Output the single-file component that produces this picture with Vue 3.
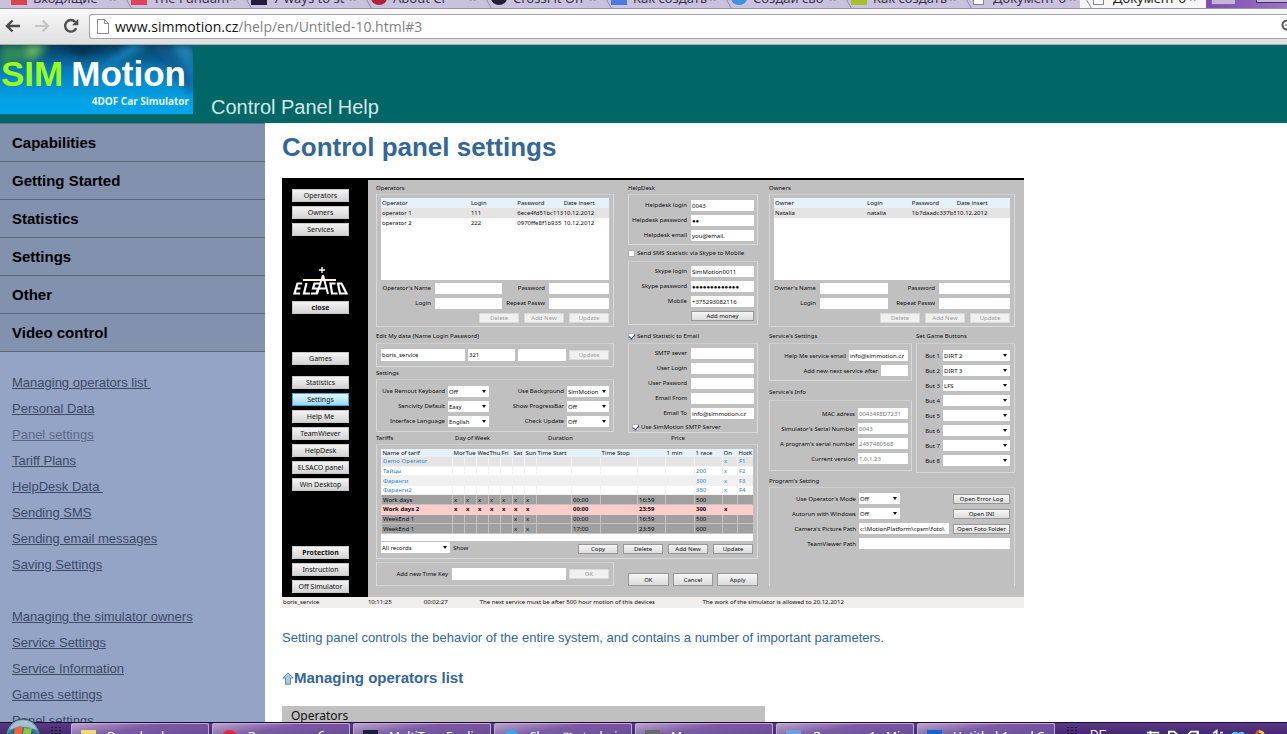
<script setup>
const tabs = [
  { t: 'Входящие', c: '#d9444f' },
  { t: 'The Fundam', c: '#e0405a' },
  { t: '7 ways to st', c: '#241c3a' },
  { t: 'About Cr', c: '#b3203a', r: 1 },
  { t: 'CrossFit On', c: '#241f38', r: 1 },
  { t: 'Как создать', c: '#4a7be0' },
  { t: 'Создай сво', c: '#3a94dc', r: 1 },
  { t: 'Как создать', c: '#a6bf2a' },
  { t: 'Документ б', doc: 1 },
  { t: 'Документ б', doc: 1, on: 1 }
]
const menu = ['Capabilities', 'Getting Started', 'Statistics', 'Settings', 'Other', 'Video control']
const links1 = ['Managing operators list\u00a0', 'Personal Data', 'Panel settings', 'Tariff Plans', 'HelpDesk Data\u00a0', 'Sending SMS', 'Sending email messages', 'Saving Settings']
const links2 = ['Managing the simulator owners', 'Service Settings', 'Service Information', 'Games settings', 'Panel settings']

const navTop = ['Operators', 'Owners', 'Services']
const navMid = ['Statistics', 'Settings', 'Help Me', 'TeamWiever', 'HelpDesk', 'ELSACO panel', 'Win Desktop']
const navEnd = ['Protection', 'Instruction', 'Off Simulator']

const people = [
  {
    title: 'Operators', cls: 'ops', head: 'Operator', name: "Operator's Name",
    rows: [['operator 1', '111', '6ece4fd51bc113', '10.12.2012'], ['operator 2', '222', '0970ffe8f1b935', '10.12.2012']]
  },
  {
    title: 'Owners', cls: 'own', head: 'Owner', name: "Owner's Name",
    rows: [['Natalia', 'natalia', '1b7daadc337b5', '10.12.2012']]
  }
]
const opts = [
  ['Use Remout Keyboard', 'Off', 'Use Background', 'SimMotion'],
  ['Sencivity Default', 'Easy', 'Show ProgressBar', 'Off'],
  ['Interface Language', 'English', 'Check Update', 'Off']
]
const help = [['Helpdesk login', '0043'], ['Helpdesk password', '●●'], ['Helpdesk email', 'you@email.']]
const skype = [['Skype login', 'SimMotion0011'], ['Skype password', '●●●●●●●●●●●●●'], ['Mobile', '+375293082116']]
const smtp = [['SMTP sever', ''], ['User Login', ''], ['User Pasword', ''], ['Email From', ''], ['Email To', 'info@simmotion.cz']]
const info = [['MAC adress', '00434F8D7231'], ["Simulator's Serial Number", '0043'], ["A program's serial number", '2457480568'], ['Current version', '1.0.1.23']]
const games = ['DIRT 2', 'DIRT 3', 'LFS', '', '', '', '', '']

const cols = ['Name of tarif', 'Mon', 'Tue', 'Wed', 'Thu', 'Fri', 'Sat', 'Sun', 'Time Start', '', 'Time Stop', '', '1 min', '1 race', 'On', 'HotK']
const x7 = ['x', 'x', 'x', 'x', 'x', 'x', 'x']
const we = ['', '', '', '', '', 'x', 'x']
const no = ['', '', '', '', '', '', '']
const tariffs = [
  { k: 'blue odd', c: ['Demo Operator', ...no, '', '', '', '', '', '', 'x', 'F1'] },
  { k: 'blue', c: ['Тайцы', ...no, '', '', '', '', '', '200', 'x', 'F2'] },
  { k: 'blue pale', c: ['Фаранги', ...no, '', '', '', '', '', '300', 'x', 'F3'] },
  { k: 'blue', c: ['Фаранги2', ...no, '', '', '', '', '', '350', 'x', 'F4'] },
  { k: 'dark', c: ['Work days', ...x7, '', '00:00', '', '16:59', '', '500', '', ''] },
  { k: 'pink', c: ['Work days 2', ...x7, '', '00:00', '', '23:59', '', '300', 'x', ''] },
  { k: 'dark', c: ['WeekEnd 1', ...we, '', '00:00', '', '16:59', '', '500', '', ''] },
  { k: 'dark', c: ['WeekEnd 1', ...we, '', '17:00', '', '23:59', '', '600', '', ''] }
]
const tasks = [
  { t: 'Downloads', c: '#f0d878' },
  { t: 'Входящие - б', c: '#e02a3a', r: 1 },
  { t: 'MultiTran Englis', c: '#1a2040' },
  { t: 'Skype™ - technic', c: '#1fb0ee', r: 1 },
  { t: 'Мануал', c: '#6a6a6a' },
  { t: 'Документ1 - Mi', c: '#6f9fe0' },
  { t: 'Untitled-1 and C', c: '#1668c8' }
]
</script>

<template>
  <div class="screen">
    <div class="tabs">
      <button v-for="(t, i) in tabs" :key="i" class="tab" :class="{ on: t.on }">
        <i class="fav" :class="{ doc: t.doc, round: t.r }" :style="t.c ? { background: t.c } : null"></i>
        <span>{{ t.t }}</span><em>×</em>
      </button>
      <button class="newtab" aria-label="New tab"></button>
      <i class="winctl"></i>
    </div>

    <div class="toolbar">
      <button class="tb" aria-label="Back">
        <svg width="16" height="14" viewBox="0 0 16 14"><path d="M15 7H2.500M7.500 1.500L2 7l5.500 5.500" fill="none" stroke="#4a4a4a" stroke-width="2.400" /></svg>
      </button>
      <button class="tb" aria-label="Forward">
        <svg width="16" height="14" viewBox="0 0 16 14"><path d="M1 7h12.500M8.500 1.500L14 7l-5.500 5.500" fill="none" stroke="#c4c4c4" stroke-width="2.200" /></svg>
      </button>
      <button class="tb" aria-label="Reload">
        <svg width="16" height="16" viewBox="0 0 16 16"><path d="M13.200 10.200A5.800 5.800 0 1 1 12.300 4" fill="none" stroke="#505050" stroke-width="2.400" /><path d="M15.300 .8v6.400H9z" fill="#505050" /></svg>
      </button>
      <div class="omni">
        <svg width="12" height="15" viewBox="0 0 12 15"><path d="M.5.5h7l4 4v10H.5zM7.500.5v4h4" fill="#fff" stroke="#8a8a8a" /></svg>
        <span class="url"><b>www.simmotion.cz</b>/help/en/Untitled-10.html#3</span>
        <svg class="mag" width="14" height="14" viewBox="0 0 14 14"><circle cx="6" cy="6" r="4.500" fill="none" stroke="#555" stroke-width="2" /><path d="M4 6h4" stroke="#555" /></svg>
      </div>
    </div>

    <div class="page">
      <header class="head">
        <div class="logo">
          <svg class="logobg" viewBox="0 0 192 69" preserveAspectRatio="none">
            <defs>
              <linearGradient id="lg" x1="0" y1="0" x2="0" y2="1"><stop offset="0" stop-color="#063a58" /><stop offset=".35" stop-color="#0878b8" /><stop offset=".75" stop-color="#04a0e4" /><stop offset="1" stop-color="#00a4ec" /></linearGradient>
              <filter id="bl"><feGaussianBlur stdDeviation="4" /></filter>
            </defs>
            <rect width="192" height="69" fill="url(#lg)" />
            <g filter="url(#bl)">
              <path d="M0 0h50L38 14 0 22z" fill="#2f8a5c" /><path d="M28 0h14L30 16z" fill="#7cc860" />
              <path d="M150 0h12l30 34v18z" fill="#0a5a90" /><path d="M130 0h20l-60 30z" fill="#1a8cc8" />
              <path d="M168 0h24v26z" fill="#2486b8" /><path d="M60 0h50L80 10z" fill="#052c48" />
            </g>
          </svg>
          <div class="brand"><span class="sim">SIM</span><span>Motion</span></div>
          <div class="tag">4DOF Car Simulator</div>
        </div>
        <div class="sub">Control Panel Help</div>
      </header>

      <div class="body">
        <aside class="side">
          <nav class="menu"><a v-for="m in menu" :key="m" href="#">{{ m }}</a></nav>
          <nav class="links">
            <a v-for="(l, i) in links1" :key="l" href="#" :class="{ seen: i === 2 }">{{ l }}</a>
            <a v-for="(l, i) in links2" :key="l" href="#" :class="{ first: i === 0 }">{{ l }}</a>
          </nav>
        </aside>

        <main class="content">
          <h1>Control panel settings</h1>

          <section class="shot">
            <div class="frame">
              <div class="nav">
                <div class="ng"><button v-for="n in navTop" :key="n">{{ n }}</button></div>
                <svg class="elsaco" width="57" height="31" viewBox="0 0 57 31" fill="none" stroke="#fff">
                  <path d="M30 1v6M27 4h6" stroke-width="1.300" />
                  <path d="M11 14H44" stroke="#fff8d8" stroke-width="1.800" />
                  <path d="M10 17.500H5.500L2.500 27.500H8M4 22.500h4.500M14.500 17L12 27.500h6M28 17.500h-5.500l-1.500 5h5l-1.500 5h-5.500" stroke-width="2.200" />
                  <path d="M31 9L25 28M31 9L36 28M27.500 22.500h6" stroke-width="2" />
                  <path d="M43.500 17.500h-5l1.500 10h5.500M46 17.500l2 10h6.500L49.500 17.500z" stroke-width="2.200" />
                </svg>
                <button class="bold close">close</button>
                <button class="games">Games</button>
                <div class="ng mid"><button v-for="(n, i) in navMid" :key="n" :class="{ act: i === 1 }">{{ n }}</button></div>
                <div class="ng end"><button v-for="(n, i) in navEnd" :key="n" :class="{ bold: i === 0 }">{{ n }}</button></div>
              </div>

              <div class="work">
                <div class="left">
                  <div class="pair">
                    <div class="colA">
                      <template v-for="p in people.slice(0, 1)" :key="p.title">
                        <div class="cap">{{ p.title }}</div>
                        <div class="box people">
                          <div class="list">
                            <table>
                              <thead><tr><th>{{ p.head }}</th><th>Login</th><th>Password</th><th>Date insert</th></tr></thead>
                              <tbody><tr v-for="r in p.rows" :key="r[0]"><td v-for="c in r" :key="c">{{ c }}</td></tr></tbody>
                            </table>
                          </div>
                          <div class="fields" :class="p.cls">
                            <label><span>{{ p.name }}</span><input /></label>
                            <label><span>Password</span><input /></label>
                            <label><span>Login</span><input /></label>
                            <label><span>Repeat Passw</span><input /></label>
                          </div>
                          <div class="acts"><button disabled>Delete</button><button disabled>Add New</button><button disabled>Update</button></div>
                        </div>
                      </template>
                      <div class="cap tall">Edit My data (Name Login Password)</div>
                      <div class="box line edit">
                        <input value="boris_service" aria-label="Name" class="w2" />
                        <input value="321" aria-label="Login" />
                        <input aria-label="Password" />
                        <button disabled>Update</button>
                      </div>
                      <div class="cap short">Settings</div>
                      <div class="box opts">
                        <template v-for="o in opts" :key="o[0]">
                          <label><span>{{ o[0] }}</span><span class="sel"><select><option>{{ o[1] }}</option></select></span></label>
                          <label><span>{{ o[2] }}</span><span class="sel"><select><option>{{ o[3] }}</option></select></span></label>
                        </template>
                      </div>
                    </div>

                    <div class="colB">
                      <div class="cap">HelpDesk</div>
                      <div class="box form b1"><label v-for="f in help" :key="f[0]"><span>{{ f[0] }}</span><input :value="f[1]" /></label></div>
                      <label class="check"><input type="checkbox" />Send SMS Statistic via Skype to Mobile</label>
                      <div class="box form b2">
                        <label v-for="f in skype" :key="f[0]"><span>{{ f[0] }}</span><input :value="f[1]" /></label>
                        <button class="money">Add money</button>
                      </div>
                      <label class="check more"><input type="checkbox" checked />Send Statistic to Email</label>
                      <div class="box form b3">
                        <label v-for="f in smtp" :key="f[0]"><span>{{ f[0] }}</span><input :value="f[1]" /></label>
                        <label class="check in"><input type="checkbox" checked />Use SimMotion SMTP Server</label>
                      </div>
                    </div>
                  </div>

                  <div class="heads"><span>Tariffs</span><span>Day of Week</span><span>Duration</span><span>Price</span></div>
                  <div class="box tar">
                    <div class="list">
                      <table>
                        <colgroup><col class="c1" /><col v-for="n in 7" :key="n" class="cd" /><col class="c2" /><col class="c3" /><col class="c4" /><col class="c5" /><col class="c3" /><col class="c5" /><col class="c6" /><col class="c7" /></colgroup>
                        <thead><tr><th v-for="(c, i) in cols" :key="i">{{ c }}</th></tr></thead>
                        <tbody><tr v-for="(r, j) in tariffs" :key="j" :class="r.k"><td v-for="(c, i) in r.c" :key="i">{{ c }}</td></tr></tbody>
                      </table>
                    </div>
                    <div class="tfoot">
                      <label class="rec"><span class="sel"><select><option>All records</option></select></span>Show</label>
                      <div class="acts"><button>Copy</button><button>Delete</button><button>Add New</button><button>Update</button></div>
                    </div>
                  </div>

                  <div class="pair last">
                    <div class="box line key">
                      <label><span>Add new Time Key</span><input /></label>
                      <button disabled>OK</button>
                    </div>
                    <div class="big"><button>OK</button><button>Cancel</button><button>Apply</button></div>
                  </div>
                </div>

                <div class="right">
                  <template v-for="p in people.slice(1)" :key="p.title">
                    <div class="cap">{{ p.title }}</div>
                    <div class="box people owners">
                      <div class="list">
                        <table>
                          <thead><tr><th>{{ p.head }}</th><th>Login</th><th>Password</th><th>Date insert</th></tr></thead>
                          <tbody><tr v-for="r in p.rows" :key="r[0]"><td v-for="c in r" :key="c">{{ c }}</td></tr></tbody>
                        </table>
                      </div>
                      <div class="fields" :class="p.cls">
                        <label><span>{{ p.name }}</span><input /></label>
                        <label><span>Password</span><input /></label>
                        <label><span>Login</span><input /></label>
                        <label><span>Repeat Passw</span><input /></label>
                      </div>
                      <div class="acts"><button disabled>Delete</button><button disabled>Add New</button><button disabled>Update</button></div>
                    </div>
                  </template>

                  <div class="svc">
                    <div class="svcL">
                      <div class="cap tall">Service's Settings</div>
                      <div class="box rows s1">
                        <label><span>Help Me service email</span><input value="info@simmotion.cz" class="m" /></label>
                        <label><span>Add new next service after</span><input class="s" /></label>
                      </div>
                      <div class="cap taller">Service's Info</div>
                      <div class="box rows s2">
                        <label v-for="f in info" :key="f[0]"><span>{{ f[0] }}</span><input :value="f[1]" disabled /></label>
                      </div>
                    </div>
                    <div class="svcR">
                      <div class="cap tall">Set Game Buttons</div>
                      <div class="box rows gm">
                        <label v-for="(g, i) in games" :key="i"><span>But {{ i + 1 }}</span><span class="sel"><select><option>{{ g }}</option></select></span></label>
                      </div>
                    </div>
                  </div>

                  <div class="cap">Program's Setting</div>
                  <div class="box prog">
                    <div><label><span>Use Operator's Mode</span><span class="sel"><select><option>Off</option></select></span></label><button>Open Error Log</button></div>
                    <div><label><span>Autorun with Windows</span><span class="sel"><select><option>Off</option></select></span></label><button>Open INI</button></div>
                    <div><label class="grow"><span>Camera's Picture Path</span><input value="c:\MotionPlatform\cpsm\foto\" /></label><button>Open Foto Folder</button></div>
                    <div><label class="grow"><span>TeamViewer Path</span><input /></label></div>
                  </div>
                </div>
              </div>
            </div>
            <div class="status"><span>boris_service</span><span>10:11:25</span><span>00:02:27</span><span>The next service must be after 500 hour motion of this devices</span><span>The work of the simulator is allowed to 20.12.2012</span></div>
          </section>

          <p>Setting panel controls the behavior of the entire system, and contains a number of important parameters.</p>
          <h2>
            <svg width="12" height="13" viewBox="0 0 12 13"><path d="M6 .8L11.200 6H8.500v6.200h-5V6H.8z" fill="#a8c8dc" stroke="#5f8fa8" /></svg>Managing operators list
          </h2>
          <div class="next">Operators</div>
        </main>
      </div>
    </div>

    <footer class="taskbar">
      <button class="orb" aria-label="Start">
        <svg width="36" height="36" viewBox="0 0 36 36">
          <defs><radialGradient id="og" cx=".5" cy=".7" r=".7"><stop offset="0" stop-color="#3aa0d8" /><stop offset=".6" stop-color="#2a5f8c" /><stop offset="1" stop-color="#8fb0c4" /></radialGradient></defs>
          <circle cx="18" cy="18" r="17" fill="url(#og)" stroke="#28405c" />
          <path d="M4 12a15 15 0 0 1 28 0q-14-6-28 0z" fill="#c4d8e0" opacity=".7" />
          <path d="M10 10q4-3 8-1l-1.500 8q-4-2-8 1z" fill="#e8643c" /><path d="M19 9.500q4 2 8 0l-1.500 8q-4 2-8 0z" fill="#8cc63e" />
        </svg>
      </button>
      <i class="grip"></i>
      <button v-for="t in tasks" :key="t.t" class="task"><i :class="{ round: t.r }" :style="{ background: t.c }"></i><span>{{ t.t }}</span></button>
      <i class="grip g2"></i>
      <span class="lang">DE</span>
      <svg class="tray" width="160" height="12" viewBox="0 0 160 12" fill="none" stroke="#fff" stroke-width="2">
        <path d="M1 10h14M5 8v4M26 12V9h6l3 3M48 12l3-3h8v3M58 8v4M76 11l4-3v4M84 10h3" />
        <path d="M98 12a4 4 0 0 1 6 0M105 12a4 4 0 0 1 6 0" stroke="#5ac0f0" stroke-width="3" />
        <path d="M125 12a5 5 0 0 1 4-4" stroke="#e0503c" stroke-width="3" /><path d="M128 9q4 0 5 3" stroke="#f0d040" stroke-width="3" />
      </svg>
    </footer>
  </div>
</template>

<style>
html, body { margin: 0; overflow: hidden; }
</style>

<style scoped>
* { box-sizing: border-box; }
button, input, select { font: inherit; color: inherit; margin: 0; padding: 0; border: 0; border-radius: 0; min-width: 0; }
.screen { display: flex; flex-direction: column; height: 100vh; overflow: hidden; background: #fff; font-family: "Liberation Sans", Arial, sans-serif; }

.tabs { flex: none; display: flex; align-items: flex-end; height: 9px; overflow: hidden; background: linear-gradient(90deg, #c6bfdb 90%, #7a4fae 94%, #9a76c4); border-bottom: 1px solid #9890a4; }
.tab { flex: none; position: relative; display: flex; align-items: center; width: 120px; height: 20px; padding: 0 0 0 11px; background: #c9c2dd; font: 13px "Noto Sans", sans-serif; color: #37324a; text-align: left; }
.tab + .tab::before { content: ""; position: absolute; left: 5px; top: 0; width: 1px; height: 20px; background: #8f88a4; transform: skewX(30deg); }
.tab span { width: 76px; overflow: hidden; white-space: nowrap; margin-left: 6px; }
.tab em { font-style: normal; color: #857d98; }
.tab.on { background: #f7f7f7; color: #222; width: 126px; }
.fav { flex: none; width: 16px; height: 14px; }
.round { border-radius: 50%; }
.doc { width: 11px; height: 13px; margin: 0 3px 0 2px; background: #fff; border: 1px solid #888; }
.newtab { align-self: flex-start; width: 25px; height: 5px; margin-left: 5px; background: #c6b4dc; border: 1px solid #8560a8; border-top: 0; }
.winctl { align-self: flex-start; flex: 1; height: 3px; margin-left: 20px; background: #c9b4de; border: 1px solid #40305c; border-right: 0; border-top: 0; }

.toolbar { flex: none; display: flex; align-items: center; height: 36px; padding: 0 0 1px 4px; background: linear-gradient(#f8f8f8, #dfdfdf); border-bottom: 1px solid #a8b0b0; }
.tb { display: flex; align-items: center; justify-content: center; width: 29px; height: 24px; background: none; }
.tb:first-child { width: 17px; margin-right: 6px; }
.omni { flex: 1; display: flex; align-items: center; height: 25px; margin-left: 4px; padding: 0 0 0 7px; background: #fff; border: 1px solid #a4a4a4; border-right: 0; border-radius: 3px 0 0 3px; overflow: hidden; }
.url { flex: 1; margin-left: 6px; font: 14px "Open Sans", sans-serif; color: #808080; white-space: nowrap; }
.url b { font-weight: 400; color: #111; }
.mag { margin-right: -8px; }

.page { flex: 1; min-height: 0; overflow: hidden; }
.head { display: flex; align-items: flex-start; height: 78px; background: #006666; }
.logo { position: relative; width: 193px; height: 69px; overflow: hidden; }
.logobg { position: absolute; inset: 0; width: 100%; height: 100%; }
.brand { position: relative; display: flex; gap: 8px; padding: 9px 0 0 1px; font-size: 35px; line-height: 40px; font-weight: 700; color: #fff; }
.sim { color: #99ff1a; }
.tag { position: relative; padding-right: 4px; text-align: right; font: 700 10px/14px "Noto Sans", sans-serif; color: #e8f6ff; }
.sub { align-self: flex-end; margin: 0 0 4px 18px; font-size: 20px; line-height: 24px; color: #d4e6e6; }

.body { display: flex; height: 100%; }
.side { flex: none; width: 265px; background: #93a4c6; }
.menu { display: flex; flex-direction: column; border-top: 1px solid #5c7088; }
.menu a { padding: 0 12px; font-size: 15px; line-height: 37px; font-weight: 700; color: #000; text-decoration: none; background: #8191ae; border-bottom: 1px solid #5f6672; }
.links { display: flex; flex-direction: column; align-items: flex-start; padding: 18px 12px 0; }
.links a { font-size: 13px; line-height: 26px; color: #3c4a66; }
.links a.seen { color: #5c6788; }
.links a.first { margin-top: 26px; }

.content { flex: 1; min-width: 0; padding: 8px 17px 0; color: #336699; }
h1 { margin: 0 0 15px; font-size: 26px; line-height: 32px; }
p { margin: 20px 0 0; font-size: 13px; line-height: 20px; }
h2 { display: flex; align-items: center; margin: 20px 0 18px; font-size: 15px; line-height: 20px; }
.next { max-width: 483px; height: 60px; padding-left: 9px; font: 12px/20px "Noto Sans", sans-serif; color: #111; background: #c0c0c0; }

.shot { max-width: 742px; font: 6px/10px "Noto Sans", sans-serif; color: #0c0c0c; white-space: nowrap; }
.frame { display: flex; border-top: 2px solid #000; background: #c0c0c0; }
.nav { flex: none; display: flex; flex-direction: column; width: 86px; padding: 9px 19px 4px 10px; background: #000; }
.nav button { flex: none; height: 13px; font-size: 7px; line-height: 11px; color: #111; background: linear-gradient(#f4f4f4, #d4d4d4); border: 1px solid #c8c8c8; }
.nav .act { background: linear-gradient(#e4f8ff, #9ad8f2); border-color: #3aa8dc; }
.nav .bold { font-weight: 700; }
.ng { display: flex; flex-direction: column; gap: 4px; }
.elsaco { margin: 30px 0 4px; }
.games { margin-top: 38px; }
.mid { margin-top: 11px; }
.end { margin-top: auto; }

.work { flex: 1; min-width: 0; display: grid; grid-template-columns: 382fr 246fr; gap: 11px; padding: 0 9px 11px 8px; }
.left, .right, .colA, .colB { min-width: 0; display: flex; flex-direction: column; }
.pair { display: grid; grid-template-columns: 238fr 130fr; gap: 14px; align-items: start; }
.cap { height: 14px; line-height: 16px; }
.tall { height: 16px; line-height: 18px; }
.taller { height: 19px; line-height: 22px; }
.short { height: 12px; line-height: 12px; }
.box { border: 1px solid #d9d9d9; border-top-color: #cfcfcf; padding: 3px 4px; }
input, select { height: 11px; padding: 0 1px; background: #fff; width: 100%; }
input[disabled] { color: #777; }
select { appearance: none; display: block; }
.sel { position: relative; display: block; }
.sel::after { content: ""; position: absolute; right: 3px; top: 4px; border: 2px solid transparent; border-top: 3px solid #111; border-bottom: 0; pointer-events: none; }
.box button, .big button { height: 10px; line-height: 8px; color: #111; background: linear-gradient(#f6f6f6, #dcdcdc); border: 1px solid #989898; }
.box button[disabled] { color: #9a9a9a; background: #f0f0f0; border-color: #dadada; }

.list { background: #fff; overflow: hidden; }
.people .list { height: 82px; }
table { width: 100%; table-layout: fixed; border-collapse: collapse; }
th, td { height: 10px; padding: 0 0 0 1px; font-weight: 400; line-height: 9px; text-align: left; overflow: hidden; white-space: nowrap; }
thead tr { background: #e6f1fa; }
.people th:first-child { width: 39%; }
.owners th:nth-child(2), .owners th:nth-child(3) { width: 19%; }
.people tbody tr:first-child { background: #e4e4e4; }
.people .list { margin-bottom: 3px; }
.fields { display: grid; gap: 4px; margin-bottom: 4px; }
.ops { grid-template-columns: 50px 67px 1fr 60px; }
.own { grid-template-columns: 42px 68px 1fr 71px; }
.fields label, .form label:not(.check), .opts label { display: contents; }
.fields span, .form span, .opts label > span:first-child { text-align: right; line-height: 11px; }
.acts { display: flex; justify-content: flex-end; gap: 5px; }
.acts button { width: 40px; }
.line { display: flex; align-items: center; gap: 3px; height: 24px; }
.line input { flex: 1; height: 12px; }
.line .w2 { flex: 1.8; }
.line button { flex: none; width: 40px; }
.opts { display: grid; grid-template-columns: 64px 41px 1fr 42px; gap: 4px 3px; padding: 6px 4px 4px; }
.form { display: grid; grid-template-columns: 1fr 63px; gap: 4px; padding: 5px 3px 3px; }
.b2, .b3 { padding-top: 4px; }
.b3 { padding-bottom: 1px; }
.money { grid-column: 2; }
.check { display: flex; align-items: center; gap: 2px; height: 16px; }
.check.more { height: 18px; padding-top: 4px; }
.check.in { grid-column: 1 / 3; height: 8px; line-height: 8px; }
.check input { appearance: none; position: relative; width: 7px; height: 7px; padding: 0; background: #fff; border: 1px solid #b0b0b0; }
.check input:checked::after { content: ""; position: absolute; left: 1px; top: -1px; width: 3px; height: 5px; border: solid #223a6c; border-width: 0 1px 1px 0; transform: rotate(40deg); }

.heads { display: grid; grid-template-columns: 79fr 93fr 123fr 87fr; line-height: 10px; height: 11px; }
.tar { padding: 4px; }
.tar .list { height: 92px; }
.tar table { height: 85px; }
.tar th, .tar td { height: auto; line-height: 8px; }
.c1 { width: 71px; } .cd { width: 12px; } .c2 { width: 35px; } .c3 { width: 29px; } .c4 { width: 37px; } .c5 { width: 28px; } .c6 { width: 15px; } .c7 { width: 16px; }
.blue { color: #2a86cc; }
.tar td { border-left: 1px solid #f2f2f2; border-bottom: 1px solid #f2f2f2; }
.odd { background: #e4e4e4; }
.pale { background: #f0f0f0; }
.tar .dark td { background: #a0a0a0; border-color: #c4c4c4; }
.tar .pink td { background: #ffcccc; border-color: #ffcccc; font-weight: 700; }
.tfoot { display: flex; align-items: flex-end; justify-content: space-between; }
.rec { display: flex; align-items: center; gap: 3px; height: 13px; }
.rec .sel { width: 69px; }
.last { align-items: end; margin-top: 3px; }
.key label { flex: 1; display: flex; align-items: center; gap: 4px; }
.key span { width: 67px; text-align: right; }
.big { display: grid; grid-template-columns: repeat(3, 1fr); gap: 4px; }
.big button { height: 13px; }

.svc { display: grid; grid-template-columns: 143fr 99fr; gap: 4px; }
.svcL, .svcR { min-width: 0; display: flex; flex-direction: column; }
.rows { display: flex; flex-direction: column; gap: 4px; padding: 6px 3px 4px; }
.rows label { display: flex; align-items: center; justify-content: flex-end; gap: 3px; height: 11px; }
.rows input { width: 50px; }
.rows .m { width: 59px; }
.rows .s { width: 27px; }
.s2 { padding: 7px 3px 6px; }
.gm { padding: 6px 4px; }
.gm .sel { width: 67px; }
.prog { flex: 1; display: flex; flex-direction: column; gap: 4px; padding: 5px 4px; border-bottom: 0; }
.prog > div { display: flex; align-items: center; justify-content: space-between; gap: 4px; height: 11px; }
.prog label { display: flex; align-items: center; gap: 3px; }
.prog label > span:first-child { flex: none; width: 82px; text-align: right; }
.prog .sel { width: 41px; }
.prog .grow { flex: 1; }
.prog button { flex: none; width: 57px; }

.status { display: grid; grid-template-columns: 85fr 56fr 56fr 223fr 322fr; padding-left: 1px; background: #f1eeee; line-height: 11px; }

.taskbar { position: relative; flex: none; display: flex; gap: 3px; height: 12px; padding-left: 47px; background: linear-gradient(#5a3a86, #46286e); border-top: 1px solid #1c0a34; }
.orb { position: absolute; left: 5px; top: -5px; width: 36px; height: 36px; background: none; }
.orb svg { display: block; }
.grip { flex: none; width: 12px; height: 9px; margin: 3px 6px 0 3px; background: radial-gradient(circle, #1c0a34 1px, transparent 1px) 0 0 / 4px 3px; }
.task { flex: none; display: flex; align-items: flex-start; width: 138px; height: 30px; padding: 6px 0 0 9px; background: linear-gradient(170deg, #b9a3cc, #7c5aa4 30%, #5f3d8c); border: 1px solid #c0aad4; border-bottom: 0; border-radius: 2px; color: #fff; font: 12px/14px "Noto Sans", sans-serif; white-space: nowrap; overflow: hidden; }
.task i { flex: none; width: 15px; height: 15px; margin-right: 11px; }
.g2 { margin-left: 8px; }
.lang { margin: 5px 36px 0 3px; font-size: 12px; line-height: 14px; color: #fff; }
.screen > .taskbar { clip-path: inset(-6px 0 0 0); }
</style>
